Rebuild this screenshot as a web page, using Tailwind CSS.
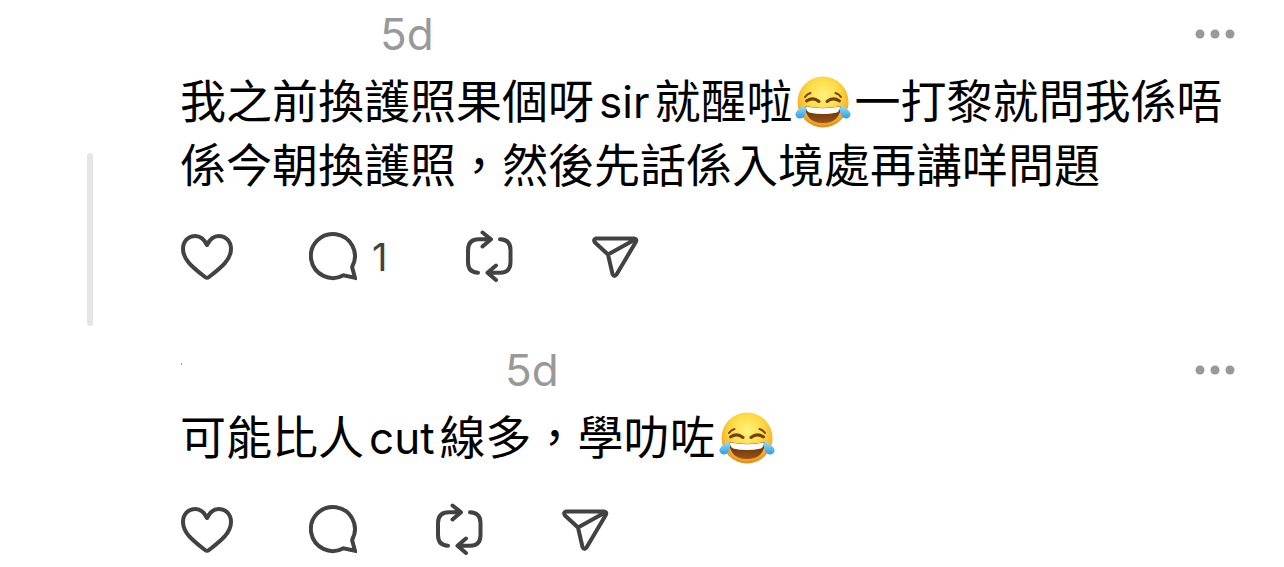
<!DOCTYPE html>
<html lang="zh-Hant">
<head>
<meta charset="utf-8">
<meta name="viewport" content="width=device-width, initial-scale=1">
<title>Thread</title>
<script src="https://cdn.jsdelivr.net/npm/@tailwindcss/browser@4"></script>
</head>
<body class="bg-white font-['Inter','Noto_Sans_CJK_TC',sans-serif] text-black">
<svg class="absolute h-0 w-0" aria-hidden="true">
  <defs>
    <radialGradient id="face" cx="50%" cy="36%" r="64%">
      <stop offset="0" stop-color="#fff27c"/><stop offset=".5" stop-color="#fedb45"/><stop offset=".8" stop-color="#f7b52c"/><stop offset="1" stop-color="#e08a1c"/>
    </radialGradient>
    <linearGradient id="tear" x1="0" y1="0" x2="0" y2="1">
      <stop offset="0" stop-color="#9fe0fa"/><stop offset="1" stop-color="#2a9fe2"/>
    </linearGradient>
    <linearGradient id="mouth" x1="0" y1="0" x2="0" y2="1">
      <stop offset="0" stop-color="#5a2c0c"/><stop offset="1" stop-color="#9a5216"/>
    </linearGradient>
    <symbol id="joy" viewBox="0 0 56 52">
      <circle cx="28" cy="26" r="25.5" fill="url(#face)"/>
      <path d="M10 30Q28 34 46 30Q45 47 28 47Q11 47 10 30Z" fill="url(#mouth)"/>
      <path d="M11 30.500Q28 34 45 30.500Q45 35 42 36.500Q28 39.500 14 36.500Q11 35 11 30.500Z" fill="#fff"/>
      <path d="M11.500 25Q18 20.500 24 25.500M32 25.500Q38 20.500 44.500 25" fill="none" stroke="#74400d" stroke-width="3" stroke-linecap="round"/>
      <path d="M10 21Q12 18 15.500 17M40.500 17Q44 18 46 21" fill="none" stroke="#74400d" stroke-width="2" stroke-linecap="round"/>
      <path d="M10.500 29Q12 38 8.500 41Q4.500 44 1.500 41Q-1 38 2.500 34.500Q5 32 10.500 29Z" fill="url(#tear)"/>
      <path d="M45.500 29Q44 38 47.500 41Q51.500 44 54.500 41Q57 38 53.500 34.500Q51 32 45.500 29Z" fill="url(#tear)"/>
    </symbol>
    <symbol id="heart" viewBox="0 0 52 56"><path d="M26 16C23 10 19 7 14.500 7C7 7 2 12.500 2 20C2 31 12 38.500 24 48Q26 49.500 28 48C40 38.500 50 31 50 20C50 12.500 45 7 37.500 7C33 7 29 10 26 16Z"/></symbol>
    <symbol id="reply" viewBox="0 0 48 56"><path d="M43.500 37A22 22 0 1 0 34.500 46.300L46 48.800L43.300 39Q43 38 43.500 37Z"/></symbol>
    <symbol id="repost" viewBox="0 0 48 56"><path d="M17.500 3.500L26 10.200L17.500 17.500M25 10.200H14Q3 10.200 3 21V33Q3 43.500 13 43.700M35 10.200Q45.500 10.500 45.500 21V33Q45.500 43.700 35 43.700H23M31 36.500L22.500 43.700L31 51"/></symbol>
    <symbol id="send" viewBox="0 0 48 56"><path d="M5 9.500H43Q46.500 10 44.800 13L25.500 45.500Q23 48.500 21.500 45L17 25.500L4 13.500Q1.800 10.500 5 9.500ZM17 25.500L44 10.500"/></symbol>
    <symbol id="more" viewBox="0 0 40 10"><circle cx="5" cy="5" r="4.500"/><circle cx="20" cy="5" r="4.500"/><circle cx="35" cy="5" r="4.500"/></symbol>
  </defs>
</svg>
<main>
  <article class="flex">
    <div class="flex w-[180px] shrink-0 justify-center pt-[153px] pb-[10px]"><div class="w-1.5 rounded-full bg-[#e5e5e5]"></div></div>
    <div class="min-w-0 flex-1 pr-[49px]">
      <header class="flex h-[70px] items-center pb-0.5">
        <span class="w-[200px]"></span>
        <time class="text-[44px] leading-[50px] text-[#999]">5d</time>
        <button aria-label="More" class="ml-auto"><svg class="h-[10px] w-[40px] fill-[#999]"><use href="#more"/></svg></button>
      </header>
      <p class="text-[46px] leading-[63px]">我之前換護照果個呀<span class="mx-[5px] text-[44px]">sir</span>就醒啦<svg role="img" aria-label="😂" class="mx-[3px] -mt-1.5 inline-block h-[52px] w-[56px] align-middle"><use href="#joy"/></svg>一打黎就問我係唔係今朝換護照，然後先話係入境處再講咩問題</p>
      <footer class="mt-8 mb-[51px] flex items-center gap-[78px] fill-none pl-px text-[#424242]">
        <button aria-label="Like" class="-mr-0.5"><svg class="h-14 w-[52px] stroke-current stroke-4 [stroke-linejoin:round]"><use href="#heart"/></svg></button>
        <button aria-label="Reply" class="flex items-center gap-[15px]"><svg class="h-14 w-12 stroke-current stroke-4"><use href="#reply"/></svg><span class="text-[38px] leading-[56px]">1</span></button>
        <button aria-label="Repost"><svg class="h-14 w-12 stroke-current stroke-4 [stroke-linecap:round] [stroke-linejoin:round]"><use href="#repost"/></svg></button>
        <button aria-label="Share"><svg class="h-14 w-12 stroke-current stroke-4 [stroke-linejoin:round]"><use href="#send"/></svg></button>
      </footer>
    </div>
  </article>
  <article class="flex">
    <div class="w-[180px] shrink-0"></div>
    <div class="min-w-0 flex-1 pr-[49px]">
      <header class="flex h-[70px] items-center pb-0.5">
        <span class="flex h-[14px] w-[325px] items-start"><i class="ml-px h-0.5 w-px bg-gray-400"></i></span>
        <time class="text-[44px] leading-[50px] text-[#999]">5d</time>
        <button aria-label="More" class="ml-auto"><svg class="h-[10px] w-[40px] fill-[#999]"><use href="#more"/></svg></button>
      </header>
      <p class="text-[46px] leading-[63px]">可能比人<span class="mx-[5px] text-[44px]">cut</span>線多，學叻咗<svg role="img" aria-label="😂" class="mx-[3px] -mt-1.5 inline-block h-[52px] w-[56px] align-middle"><use href="#joy"/></svg></p>
      <footer class="mt-8 flex items-center gap-[78px] fill-none pl-px text-[#424242]">
        <button aria-label="Like" class="-mr-0.5"><svg class="h-14 w-[52px] stroke-current stroke-4 [stroke-linejoin:round]"><use href="#heart"/></svg></button>
        <button aria-label="Reply"><svg class="h-14 w-12 stroke-current stroke-4"><use href="#reply"/></svg></button>
        <button aria-label="Repost"><svg class="h-14 w-12 stroke-current stroke-4 [stroke-linecap:round] [stroke-linejoin:round]"><use href="#repost"/></svg></button>
        <button aria-label="Share"><svg class="h-14 w-12 stroke-current stroke-4 [stroke-linejoin:round]"><use href="#send"/></svg></button>
      </footer>
    </div>
  </article>
</main>
</body>
</html>
